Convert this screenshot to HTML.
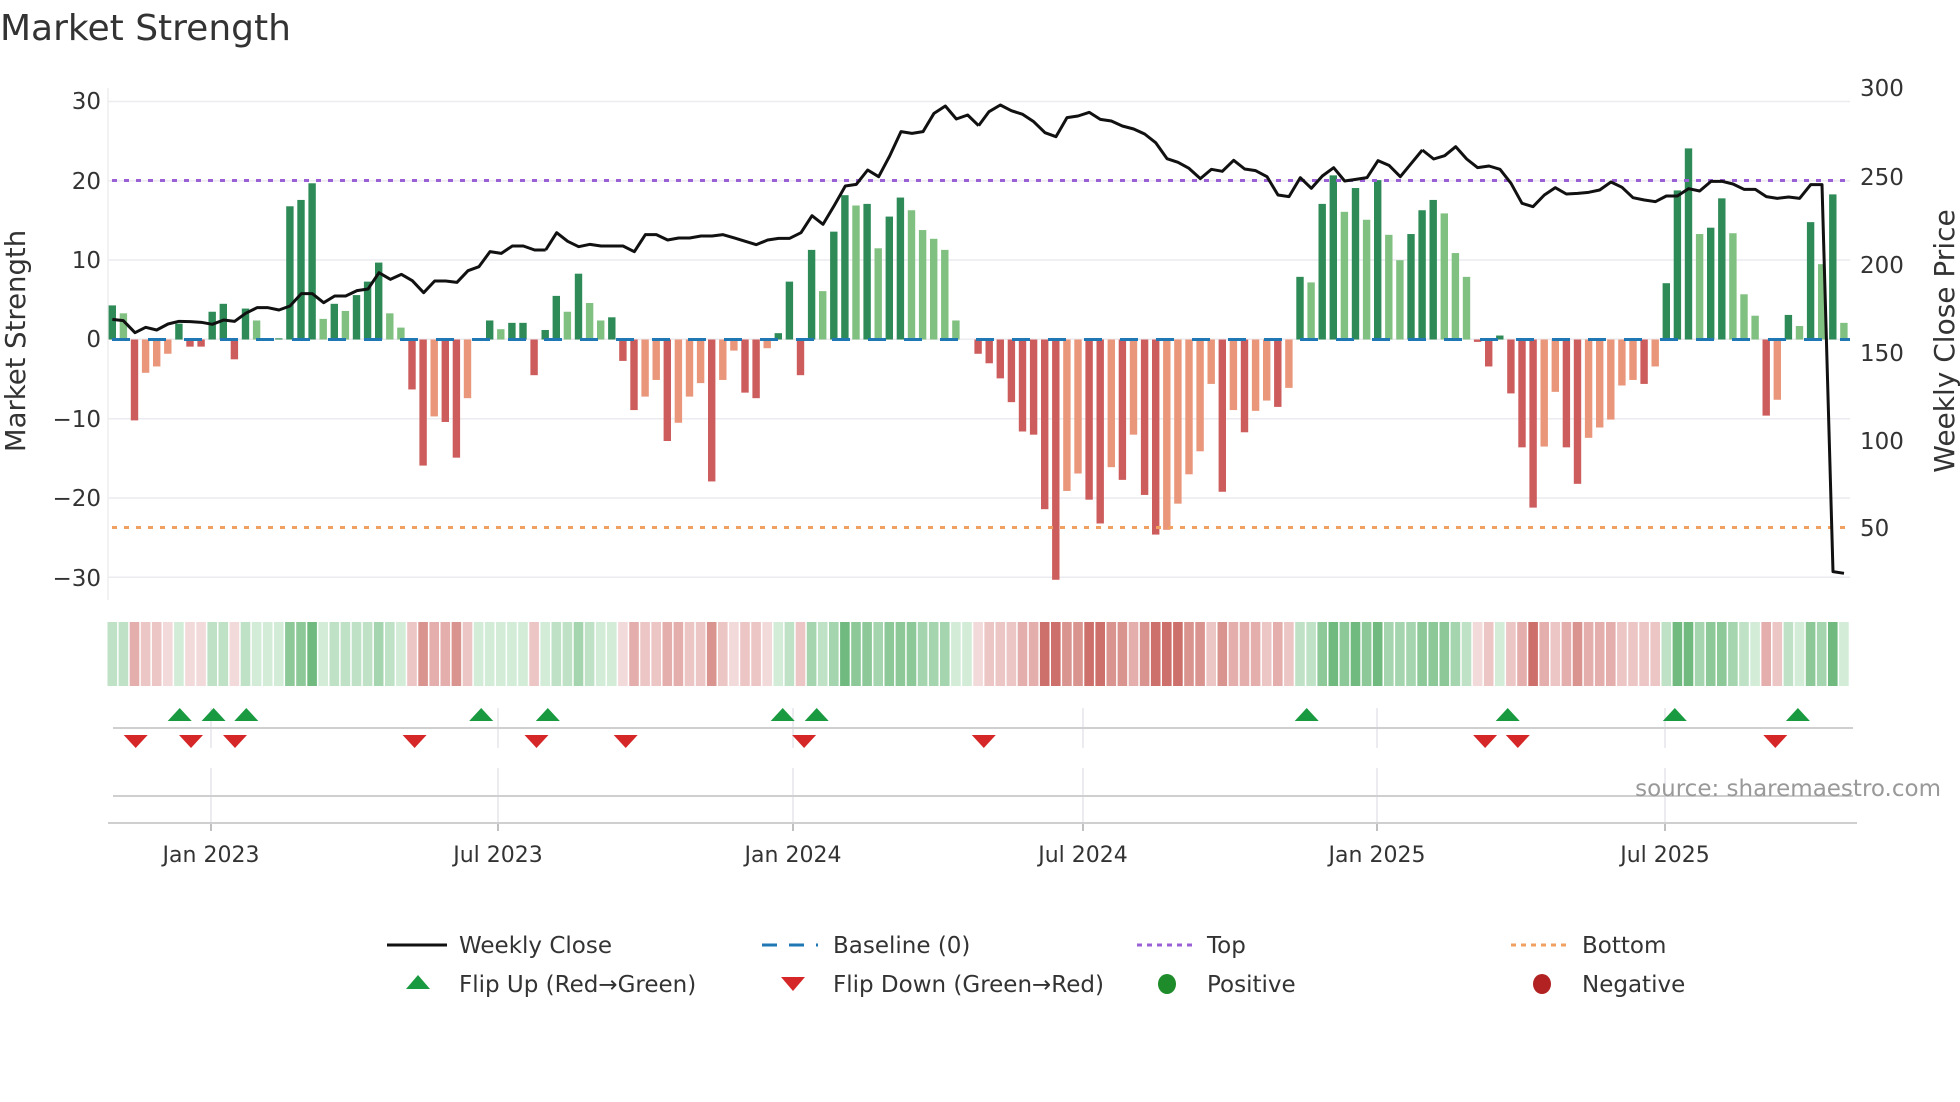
<!DOCTYPE html>
<html><head><meta charset="utf-8">
<style>
html,body{margin:0;padding:0;background:#fff;}
svg{display:block;font-family:"DejaVu Sans","Liberation Sans",sans-serif;}
.D{fill:#2e8b57}.L{fill:#80c080}.R{fill:#cd5c5c}.O{fill:#e9967a}
.g1{fill:#d3ecd8}.g2{fill:#bfe2c6}.g3{fill:#a5d5ae}.g4{fill:#8cc898}.g5{fill:#70ba80}
.r1{fill:#f3dada}.r2{fill:#ecc5c5}.r3{fill:#e4aeac}.r4{fill:#da9490}.r5{fill:#cd6f6a}
.up{fill:#1a9a40}.dn{fill:#d62728}
</style></head>
<body>
<svg width="1960" height="1102" viewBox="0 0 1960 1102" xmlns="http://www.w3.org/2000/svg">
<rect width="1960" height="1102" fill="#fff"/>
<text x="0" y="40" font-size="36" fill="#333">Market Strength</text>
<g stroke="#ebebf0" stroke-width="1.5">
<line x1="108" y1="101.5" x2="1850" y2="101.5"/><line x1="108" y1="180.7" x2="1850" y2="180.7"/>
<line x1="108" y1="260" x2="1850" y2="260"/><line x1="108" y1="339.3" x2="1850" y2="339.3"/>
<line x1="108" y1="418.7" x2="1850" y2="418.7"/><line x1="108" y1="498" x2="1850" y2="498"/>
<line x1="108" y1="577.3" x2="1850" y2="577.3"/>
</g>
<line x1="108" y1="88" x2="108" y2="600" stroke="#eeeeee" stroke-width="1.5"/>
<g transform="translate(108.6,339.5) scale(11.1,-7.93)">
<rect class="D" x="0" y="0" width=".667" height="4.3"/>
<rect class="L" x="1" y="0" width=".667" height="3.3"/>
<rect class="R" x="2" y="-10.2" width=".667" height="10.2"/>
<rect class="O" x="3" y="-4.2" width=".667" height="4.2"/>
<rect class="O" x="4" y="-3.4" width=".667" height="3.4"/>
<rect class="O" x="5" y="-1.8" width=".667" height="1.8"/>
<rect class="D" x="6" y="0" width=".667" height="2"/>
<rect class="R" x="7" y="-.9" width=".667" height=".9"/>
<rect class="R" x="8" y="-.9" width=".667" height=".9"/>
<rect class="D" x="9" y="0" width=".667" height="3.5"/>
<rect class="D" x="10" y="0" width=".667" height="4.5"/>
<rect class="R" x="11" y="-2.5" width=".667" height="2.5"/>
<rect class="D" x="12" y="0" width=".667" height="3.9"/>
<rect class="L" x="13" y="0" width=".667" height="2.4"/>
<rect class="D" x="15" y="0" width=".667" height=".15"/>
<rect class="D" x="16" y="0" width=".667" height="16.8"/>
<rect class="D" x="17" y="0" width=".667" height="17.6"/>
<rect class="D" x="18" y="0" width=".667" height="19.7"/>
<rect class="L" x="19" y="0" width=".667" height="2.6"/>
<rect class="D" x="20" y="0" width=".667" height="4.5"/>
<rect class="L" x="21" y="0" width=".667" height="3.6"/>
<rect class="D" x="22" y="0" width=".667" height="5.6"/>
<rect class="D" x="23" y="0" width=".667" height="7.3"/>
<rect class="D" x="24" y="0" width=".667" height="9.7"/>
<rect class="L" x="25" y="0" width=".667" height="3.3"/>
<rect class="L" x="26" y="0" width=".667" height="1.5"/>
<rect class="R" x="27" y="-6.3" width=".667" height="6.3"/>
<rect class="R" x="28" y="-15.9" width=".667" height="15.9"/>
<rect class="O" x="29" y="-9.7" width=".667" height="9.7"/>
<rect class="R" x="30" y="-10.4" width=".667" height="10.4"/>
<rect class="R" x="31" y="-14.9" width=".667" height="14.9"/>
<rect class="O" x="32" y="-7.4" width=".667" height="7.4"/>
<rect class="D" x="34" y="0" width=".667" height="2.4"/>
<rect class="L" x="35" y="0" width=".667" height="1.3"/>
<rect class="D" x="36" y="0" width=".667" height="2.1"/>
<rect class="D" x="37" y="0" width=".667" height="2.1"/>
<rect class="R" x="38" y="-4.5" width=".667" height="4.5"/>
<rect class="D" x="39" y="0" width=".667" height="1.2"/>
<rect class="D" x="40" y="0" width=".667" height="5.5"/>
<rect class="L" x="41" y="0" width=".667" height="3.5"/>
<rect class="D" x="42" y="0" width=".667" height="8.3"/>
<rect class="L" x="43" y="0" width=".667" height="4.6"/>
<rect class="L" x="44" y="0" width=".667" height="2.4"/>
<rect class="D" x="45" y="0" width=".667" height="2.8"/>
<rect class="R" x="46" y="-2.7" width=".667" height="2.7"/>
<rect class="R" x="47" y="-8.9" width=".667" height="8.9"/>
<rect class="O" x="48" y="-7.2" width=".667" height="7.2"/>
<rect class="O" x="49" y="-5.1" width=".667" height="5.1"/>
<rect class="R" x="50" y="-12.8" width=".667" height="12.8"/>
<rect class="O" x="51" y="-10.5" width=".667" height="10.5"/>
<rect class="O" x="52" y="-7.2" width=".667" height="7.2"/>
<rect class="O" x="53" y="-5.5" width=".667" height="5.5"/>
<rect class="R" x="54" y="-17.9" width=".667" height="17.9"/>
<rect class="O" x="55" y="-5.1" width=".667" height="5.1"/>
<rect class="O" x="56" y="-1.4" width=".667" height="1.4"/>
<rect class="R" x="57" y="-6.7" width=".667" height="6.7"/>
<rect class="R" x="58" y="-7.4" width=".667" height="7.4"/>
<rect class="O" x="59" y="-1.1" width=".667" height="1.1"/>
<rect class="D" x="60" y="0" width=".667" height=".8"/>
<rect class="D" x="61" y="0" width=".667" height="7.3"/>
<rect class="R" x="62" y="-4.5" width=".667" height="4.5"/>
<rect class="D" x="63" y="0" width=".667" height="11.3"/>
<rect class="L" x="64" y="0" width=".667" height="6.1"/>
<rect class="D" x="65" y="0" width=".667" height="13.6"/>
<rect class="D" x="66" y="0" width=".667" height="18.2"/>
<rect class="L" x="67" y="0" width=".667" height="16.9"/>
<rect class="D" x="68" y="0" width=".667" height="17.1"/>
<rect class="L" x="69" y="0" width=".667" height="11.5"/>
<rect class="D" x="70" y="0" width=".667" height="15.5"/>
<rect class="D" x="71" y="0" width=".667" height="17.9"/>
<rect class="L" x="72" y="0" width=".667" height="16.3"/>
<rect class="L" x="73" y="0" width=".667" height="13.8"/>
<rect class="L" x="74" y="0" width=".667" height="12.7"/>
<rect class="L" x="75" y="0" width=".667" height="11.3"/>
<rect class="L" x="76" y="0" width=".667" height="2.4"/>
<rect class="R" x="78" y="-1.8" width=".667" height="1.8"/>
<rect class="R" x="79" y="-3" width=".667" height="3"/>
<rect class="R" x="80" y="-4.9" width=".667" height="4.9"/>
<rect class="R" x="81" y="-7.9" width=".667" height="7.9"/>
<rect class="R" x="82" y="-11.6" width=".667" height="11.6"/>
<rect class="R" x="83" y="-12" width=".667" height="12"/>
<rect class="R" x="84" y="-21.4" width=".667" height="21.4"/>
<rect class="R" x="85" y="-30.3" width=".667" height="30.3"/>
<rect class="O" x="86" y="-19.1" width=".667" height="19.1"/>
<rect class="O" x="87" y="-16.9" width=".667" height="16.9"/>
<rect class="R" x="88" y="-20.2" width=".667" height="20.2"/>
<rect class="R" x="89" y="-23.2" width=".667" height="23.2"/>
<rect class="O" x="90" y="-16.1" width=".667" height="16.1"/>
<rect class="R" x="91" y="-17.7" width=".667" height="17.7"/>
<rect class="O" x="92" y="-12" width=".667" height="12"/>
<rect class="R" x="93" y="-19.6" width=".667" height="19.6"/>
<rect class="R" x="94" y="-24.6" width=".667" height="24.6"/>
<rect class="O" x="95" y="-24" width=".667" height="24"/>
<rect class="O" x="96" y="-20.7" width=".667" height="20.7"/>
<rect class="O" x="97" y="-17" width=".667" height="17"/>
<rect class="O" x="98" y="-14.1" width=".667" height="14.1"/>
<rect class="O" x="99" y="-5.6" width=".667" height="5.6"/>
<rect class="R" x="100" y="-19.2" width=".667" height="19.2"/>
<rect class="O" x="101" y="-8.9" width=".667" height="8.9"/>
<rect class="R" x="102" y="-11.7" width=".667" height="11.7"/>
<rect class="O" x="103" y="-9" width=".667" height="9"/>
<rect class="O" x="104" y="-7.7" width=".667" height="7.7"/>
<rect class="R" x="105" y="-8.5" width=".667" height="8.5"/>
<rect class="O" x="106" y="-6.1" width=".667" height="6.1"/>
<rect class="D" x="107" y="0" width=".667" height="7.9"/>
<rect class="L" x="108" y="0" width=".667" height="7.2"/>
<rect class="D" x="109" y="0" width=".667" height="17.1"/>
<rect class="D" x="110" y="0" width=".667" height="20.7"/>
<rect class="L" x="111" y="0" width=".667" height="16.1"/>
<rect class="D" x="112" y="0" width=".667" height="19.1"/>
<rect class="L" x="113" y="0" width=".667" height="15.1"/>
<rect class="D" x="114" y="0" width=".667" height="20.1"/>
<rect class="L" x="115" y="0" width=".667" height="13.2"/>
<rect class="L" x="116" y="0" width=".667" height="10"/>
<rect class="D" x="117" y="0" width=".667" height="13.3"/>
<rect class="D" x="118" y="0" width=".667" height="16.3"/>
<rect class="D" x="119" y="0" width=".667" height="17.6"/>
<rect class="L" x="120" y="0" width=".667" height="15.9"/>
<rect class="L" x="121" y="0" width=".667" height="10.9"/>
<rect class="L" x="122" y="0" width=".667" height="7.9"/>
<rect class="R" x="123" y="-.3" width=".667" height=".3"/>
<rect class="R" x="124" y="-3.4" width=".667" height="3.4"/>
<rect class="D" x="125" y="0" width=".667" height=".5"/>
<rect class="R" x="126" y="-6.8" width=".667" height="6.8"/>
<rect class="R" x="127" y="-13.6" width=".667" height="13.6"/>
<rect class="R" x="128" y="-21.2" width=".667" height="21.2"/>
<rect class="O" x="129" y="-13.5" width=".667" height="13.5"/>
<rect class="O" x="130" y="-6.6" width=".667" height="6.6"/>
<rect class="R" x="131" y="-13.6" width=".667" height="13.6"/>
<rect class="R" x="132" y="-18.2" width=".667" height="18.2"/>
<rect class="O" x="133" y="-12.4" width=".667" height="12.4"/>
<rect class="O" x="134" y="-11.1" width=".667" height="11.1"/>
<rect class="O" x="135" y="-10.1" width=".667" height="10.1"/>
<rect class="O" x="136" y="-5.8" width=".667" height="5.8"/>
<rect class="O" x="137" y="-5.1" width=".667" height="5.1"/>
<rect class="R" x="138" y="-5.6" width=".667" height="5.6"/>
<rect class="O" x="139" y="-3.4" width=".667" height="3.4"/>
<rect class="D" x="140" y="0" width=".667" height="7.1"/>
<rect class="D" x="141" y="0" width=".667" height="18.8"/>
<rect class="D" x="142" y="0" width=".667" height="24.1"/>
<rect class="L" x="143" y="0" width=".667" height="13.3"/>
<rect class="D" x="144" y="0" width=".667" height="14.1"/>
<rect class="D" x="145" y="0" width=".667" height="17.8"/>
<rect class="L" x="146" y="0" width=".667" height="13.4"/>
<rect class="L" x="147" y="0" width=".667" height="5.7"/>
<rect class="L" x="148" y="0" width=".667" height="3"/>
<rect class="R" x="149" y="-9.6" width=".667" height="9.6"/>
<rect class="O" x="150" y="-7.6" width=".667" height="7.6"/>
<rect class="D" x="151" y="0" width=".667" height="3.1"/>
<rect class="L" x="152" y="0" width=".667" height="1.7"/>
<rect class="D" x="153" y="0" width=".667" height="14.8"/>
<rect class="L" x="154" y="0" width=".667" height="9.5"/>
<rect class="D" x="155" y="0" width=".667" height="18.3"/>
<rect class="L" x="156" y="0" width=".667" height="2.1"/>
</g>
<line x1="112" y1="339.5" x2="1850" y2="339.5" stroke="#1f77b4" stroke-width="3" stroke-dasharray="18 18"/>
<line x1="112" y1="180.5" x2="1852" y2="180.5" stroke="#9b5fd6" stroke-width="3" stroke-dasharray="5 7"/>
<line x1="112" y1="527.5" x2="1852" y2="527.5" stroke="#f0a060" stroke-width="3" stroke-dasharray="5 7"/>
<g fill="none" stroke="#111" stroke-width="3" stroke-linejoin="round">
<polyline vector-effect="non-scaling-stroke" transform="translate(105,80) scale(0.33333)" points="22,718 55,722 90,758 122,742 155,750 189,732 222,724 256,725 289,727 322,733 356,720 389,724 422,700 456,683 489,683 522,690 555,678 589,641 622,641 656,668 689,648 722,648 756,632 789,627 822,578 856,598 889,583 922,602 956,638 989,603 1022,603 1056,607 1089,572 1122,560 1155,515 1189,520 1222,498 1255,498 1289,510 1322,510"/>
<polyline vector-effect="non-scaling-stroke" transform="translate(545,80) scale(0.33333)" points="2,510 35,458 68,484 101,500 135,493 168,498 201,498 234,498 268,515 301,464 334,464 368,480 401,474 434,474 468,468 501,468 534,464 568,474 601,484 634,494 668,480 701,475 734,475 768,458 801,407 834,433 868,376 901,318 934,313 968,270 1001,290 1034,228 1068,155 1101,160 1134,155 1167,100 1201,78 1234,117 1268,105 1301,137"/>
<polyline vector-effect="non-scaling-stroke" transform="translate(985,80) scale(0.33333)" points="-19,137 12,95 46,75 79,92 113,103 146,125 180,158 213,170 246,113 279,108 313,97 346,118 379,123 412,138 446,147 479,162 512,188 546,236 579,247 612,265 646,296 679,268 712,274 746,241 779,267 812,272 846,290 879,345 912,350 946,293 979,325 1012,288 1046,263 1079,303 1112,298 1146,293 1179,242 1212,256 1246,290 1279,250 1312,210"/>
<polyline vector-effect="non-scaling-stroke" transform="translate(1425,80) scale(0.33333)" points="-8,210 26,237 59,227 92,200 125,237 158,263 192,258 225,268 258,310 291,370 324,380 358,345 391,323 424,342 458,340 491,337 524,330 558,306 591,322 624,353 658,360 691,365 724,348 757,348 791,326 824,333 858,304 891,304 924,312 957,328 991,328 1024,350 1057,355 1091,351 1124,355 1157,314 1191,314 1224,1475 1257,1480"/>
</g>
<g font-size="23" fill="#333" text-anchor="end">
<text x="101" y="109">30</text><text x="101" y="189">20</text><text x="101" y="268">10</text>
<text x="101" y="347">0</text><text x="101" y="427">−10</text><text x="101" y="506">−20</text><text x="101" y="586">−30</text>
</g>
<g font-size="23" fill="#333">
<text x="1860" y="96">300</text><text x="1860" y="185">250</text><text x="1860" y="273">200</text>
<text x="1860" y="361">150</text><text x="1860" y="449">100</text><text x="1860" y="536">50</text>
</g>
<text transform="translate(25,341) rotate(-90)" font-size="27.5" fill="#333" text-anchor="middle">Market Strength</text>
<text transform="translate(1954,341) rotate(-90)" font-size="28" fill="#333" text-anchor="middle">Weekly Close Price</text>
<g transform="translate(107.5,622) scale(11.1,1)">
<rect class="g2" x="0" width=".865" height="64"/><rect class="g2" x="1" width=".865" height="64"/><rect class="r3" x="2" width=".865" height="64"/><rect class="r2" x="3" width=".865" height="64"/><rect class="r2" x="4" width=".865" height="64"/><rect class="r1" x="5" width=".865" height="64"/><rect class="g1" x="6" width=".865" height="64"/><rect class="r1" x="7" width=".865" height="64"/><rect class="r1" x="8" width=".865" height="64"/><rect class="g2" x="9" width=".865" height="64"/>
<rect class="g2" x="10" width=".865" height="64"/><rect class="r1" x="11" width=".865" height="64"/><rect class="g2" x="12" width=".865" height="64"/><rect class="g1" x="13" width=".865" height="64"/><rect class="g1" x="14" width=".865" height="64"/><rect class="g1" x="15" width=".865" height="64"/><rect class="g4" x="16" width=".865" height="64"/><rect class="g4" x="17" width=".865" height="64"/><rect class="g5" x="18" width=".865" height="64"/><rect class="g1" x="19" width=".865" height="64"/>
<rect class="g2" x="20" width=".865" height="64"/><rect class="g2" x="21" width=".865" height="64"/><rect class="g2" x="22" width=".865" height="64"/><rect class="g2" x="23" width=".865" height="64"/><rect class="g3" x="24" width=".865" height="64"/><rect class="g2" x="25" width=".865" height="64"/><rect class="g1" x="26" width=".865" height="64"/><rect class="r2" x="27" width=".865" height="64"/><rect class="r4" x="28" width=".865" height="64"/><rect class="r3" x="29" width=".865" height="64"/>
<rect class="r3" x="30" width=".865" height="64"/><rect class="r4" x="31" width=".865" height="64"/><rect class="r2" x="32" width=".865" height="64"/><rect class="g1" x="33" width=".865" height="64"/><rect class="g1" x="34" width=".865" height="64"/><rect class="g1" x="35" width=".865" height="64"/><rect class="g1" x="36" width=".865" height="64"/><rect class="g1" x="37" width=".865" height="64"/><rect class="r2" x="38" width=".865" height="64"/><rect class="g1" x="39" width=".865" height="64"/>
<rect class="g2" x="40" width=".865" height="64"/><rect class="g2" x="41" width=".865" height="64"/><rect class="g3" x="42" width=".865" height="64"/><rect class="g2" x="43" width=".865" height="64"/><rect class="g1" x="44" width=".865" height="64"/><rect class="g1" x="45" width=".865" height="64"/><rect class="r1" x="46" width=".865" height="64"/><rect class="r3" x="47" width=".865" height="64"/><rect class="r2" x="48" width=".865" height="64"/><rect class="r2" x="49" width=".865" height="64"/>
<rect class="r3" x="50" width=".865" height="64"/><rect class="r3" x="51" width=".865" height="64"/><rect class="r2" x="52" width=".865" height="64"/><rect class="r2" x="53" width=".865" height="64"/><rect class="r4" x="54" width=".865" height="64"/><rect class="r2" x="55" width=".865" height="64"/><rect class="r1" x="56" width=".865" height="64"/><rect class="r2" x="57" width=".865" height="64"/><rect class="r2" x="58" width=".865" height="64"/><rect class="r1" x="59" width=".865" height="64"/>
<rect class="g1" x="60" width=".865" height="64"/><rect class="g2" x="61" width=".865" height="64"/><rect class="r2" x="62" width=".865" height="64"/><rect class="g3" x="63" width=".865" height="64"/><rect class="g2" x="64" width=".865" height="64"/><rect class="g3" x="65" width=".865" height="64"/><rect class="g5" x="66" width=".865" height="64"/><rect class="g4" x="67" width=".865" height="64"/><rect class="g4" x="68" width=".865" height="64"/><rect class="g3" x="69" width=".865" height="64"/>
<rect class="g4" x="70" width=".865" height="64"/><rect class="g4" x="71" width=".865" height="64"/><rect class="g4" x="72" width=".865" height="64"/><rect class="g3" x="73" width=".865" height="64"/><rect class="g3" x="74" width=".865" height="64"/><rect class="g3" x="75" width=".865" height="64"/><rect class="g1" x="76" width=".865" height="64"/><rect class="g1" x="77" width=".865" height="64"/><rect class="r1" x="78" width=".865" height="64"/><rect class="r2" x="79" width=".865" height="64"/>
<rect class="r2" x="80" width=".865" height="64"/><rect class="r2" x="81" width=".865" height="64"/><rect class="r3" x="82" width=".865" height="64"/><rect class="r3" x="83" width=".865" height="64"/><rect class="r5" x="84" width=".865" height="64"/><rect class="r5" x="85" width=".865" height="64"/><rect class="r4" x="86" width=".865" height="64"/><rect class="r4" x="87" width=".865" height="64"/><rect class="r5" x="88" width=".865" height="64"/><rect class="r5" x="89" width=".865" height="64"/>
<rect class="r4" x="90" width=".865" height="64"/><rect class="r4" x="91" width=".865" height="64"/><rect class="r3" x="92" width=".865" height="64"/><rect class="r4" x="93" width=".865" height="64"/><rect class="r5" x="94" width=".865" height="64"/><rect class="r5" x="95" width=".865" height="64"/><rect class="r5" x="96" width=".865" height="64"/><rect class="r4" x="97" width=".865" height="64"/><rect class="r4" x="98" width=".865" height="64"/><rect class="r2" x="99" width=".865" height="64"/>
<rect class="r4" x="100" width=".865" height="64"/><rect class="r3" x="101" width=".865" height="64"/><rect class="r3" x="102" width=".865" height="64"/><rect class="r3" x="103" width=".865" height="64"/><rect class="r2" x="104" width=".865" height="64"/><rect class="r3" x="105" width=".865" height="64"/><rect class="r2" x="106" width=".865" height="64"/><rect class="g2" x="107" width=".865" height="64"/><rect class="g2" x="108" width=".865" height="64"/><rect class="g4" x="109" width=".865" height="64"/>
<rect class="g5" x="110" width=".865" height="64"/><rect class="g4" x="111" width=".865" height="64"/><rect class="g5" x="112" width=".865" height="64"/><rect class="g4" x="113" width=".865" height="64"/><rect class="g5" x="114" width=".865" height="64"/><rect class="g3" x="115" width=".865" height="64"/><rect class="g3" x="116" width=".865" height="64"/><rect class="g3" x="117" width=".865" height="64"/><rect class="g4" x="118" width=".865" height="64"/><rect class="g4" x="119" width=".865" height="64"/>
<rect class="g4" x="120" width=".865" height="64"/><rect class="g3" x="121" width=".865" height="64"/><rect class="g2" x="122" width=".865" height="64"/><rect class="r1" x="123" width=".865" height="64"/><rect class="r2" x="124" width=".865" height="64"/><rect class="g1" x="125" width=".865" height="64"/><rect class="r2" x="126" width=".865" height="64"/><rect class="r3" x="127" width=".865" height="64"/><rect class="r5" x="128" width=".865" height="64"/><rect class="r3" x="129" width=".865" height="64"/>
<rect class="r2" x="130" width=".865" height="64"/><rect class="r3" x="131" width=".865" height="64"/><rect class="r4" x="132" width=".865" height="64"/><rect class="r3" x="133" width=".865" height="64"/><rect class="r3" x="134" width=".865" height="64"/><rect class="r3" x="135" width=".865" height="64"/><rect class="r2" x="136" width=".865" height="64"/><rect class="r2" x="137" width=".865" height="64"/><rect class="r2" x="138" width=".865" height="64"/><rect class="r2" x="139" width=".865" height="64"/>
<rect class="g2" x="140" width=".865" height="64"/><rect class="g5" x="141" width=".865" height="64"/><rect class="g5" x="142" width=".865" height="64"/><rect class="g3" x="143" width=".865" height="64"/><rect class="g4" x="144" width=".865" height="64"/><rect class="g4" x="145" width=".865" height="64"/><rect class="g3" x="146" width=".865" height="64"/><rect class="g2" x="147" width=".865" height="64"/><rect class="g1" x="148" width=".865" height="64"/><rect class="r3" x="149" width=".865" height="64"/>
<rect class="r2" x="150" width=".865" height="64"/><rect class="g2" x="151" width=".865" height="64"/><rect class="g1" x="152" width=".865" height="64"/><rect class="g4" x="153" width=".865" height="64"/><rect class="g3" x="154" width=".865" height="64"/><rect class="g5" x="155" width=".865" height="64"/><rect class="g1" x="156" width=".865" height="64"/>
</g>
<g stroke="#e6e6ea" stroke-width="1.5">
<line x1="211" y1="708" x2="211" y2="748"/><line x1="211" y1="768" x2="211" y2="823"/>
<line x1="498" y1="708" x2="498" y2="748"/><line x1="498" y1="768" x2="498" y2="823"/>
<line x1="793" y1="708" x2="793" y2="748"/><line x1="793" y1="768" x2="793" y2="823"/>
<line x1="1083" y1="708" x2="1083" y2="748"/><line x1="1083" y1="768" x2="1083" y2="823"/>
<line x1="1377" y1="708" x2="1377" y2="748"/><line x1="1377" y1="768" x2="1377" y2="823"/>
<line x1="1665" y1="708" x2="1665" y2="748"/><line x1="1665" y1="768" x2="1665" y2="823"/>
</g>
<g stroke="#aaa" stroke-width="1.5">
<line x1="211" y1="823" x2="211" y2="831"/><line x1="498" y1="823" x2="498" y2="831"/><line x1="793" y1="823" x2="793" y2="831"/>
<line x1="1083" y1="823" x2="1083" y2="831"/><line x1="1377" y1="823" x2="1377" y2="831"/><line x1="1665" y1="823" x2="1665" y2="831"/>
</g>
<line x1="113" y1="728" x2="1853" y2="728" stroke="#cfcfcf" stroke-width="2"/>
<line x1="113" y1="796" x2="1853" y2="796" stroke="#cfcfcf" stroke-width="2"/>
<line x1="108" y1="823" x2="1857" y2="823" stroke="#cfcfcf" stroke-width="2"/>
<g class="up">
<polygon transform="translate(179.7,0)" points="-12,721 12,721 0,708"/>
<polygon transform="translate(213.6,0)" points="-12,721 12,721 0,708"/>
<polygon transform="translate(246.3,0)" points="-12,721 12,721 0,708"/>
<polygon transform="translate(481.2,0)" points="-12,721 12,721 0,708"/>
<polygon transform="translate(547.8,0)" points="-12,721 12,721 0,708"/>
<polygon transform="translate(782.7,0)" points="-12,721 12,721 0,708"/>
<polygon transform="translate(816.7,0)" points="-12,721 12,721 0,708"/>
<polygon transform="translate(1306.7,0)" points="-12,721 12,721 0,708"/>
<polygon transform="translate(1507.7,0)" points="-12,721 12,721 0,708"/>
<polygon transform="translate(1674.8,0)" points="-12,721 12,721 0,708"/>
<polygon transform="translate(1797.9,0)" points="-12,721 12,721 0,708"/>
</g>
<g class="dn">
<polygon transform="translate(135.7,0)" points="-12,735 12,735 0,748"/>
<polygon transform="translate(191,0)" points="-12,735 12,735 0,748"/>
<polygon transform="translate(235,0)" points="-12,735 12,735 0,748"/>
<polygon transform="translate(414.6,0)" points="-12,735 12,735 0,748"/>
<polygon transform="translate(536.5,0)" points="-12,735 12,735 0,748"/>
<polygon transform="translate(625.7,0)" points="-12,735 12,735 0,748"/>
<polygon transform="translate(804.1,0)" points="-12,735 12,735 0,748"/>
<polygon transform="translate(983.8,0)" points="-12,735 12,735 0,748"/>
<polygon transform="translate(1485.1,0)" points="-12,735 12,735 0,748"/>
<polygon transform="translate(1517.8,0)" points="-12,735 12,735 0,748"/>
<polygon transform="translate(1775.3,0)" points="-12,735 12,735 0,748"/>
</g>
<g font-size="22" fill="#333" text-anchor="middle">
<text x="211" y="862">Jan 2023</text><text x="498" y="862">Jul 2023</text><text x="793" y="862">Jan 2024</text>
<text x="1083" y="862">Jul 2024</text><text x="1377" y="862">Jan 2025</text><text x="1665" y="862">Jul 2025</text>
</g>
<text x="1941" y="796" font-size="23" fill="#999" text-anchor="end">source: sharemaestro.com</text>
<g font-size="23" fill="#333">
<line x1="387" y1="945" x2="447" y2="945" stroke="#111" stroke-width="3"/>
<text x="459" y="953">Weekly Close</text>
<line x1="762" y1="945" x2="818" y2="945" stroke="#1f77b4" stroke-width="3" stroke-dasharray="15 12"/>
<text x="833" y="953">Baseline (0)</text>
<line x1="1137" y1="945" x2="1192" y2="945" stroke="#9b5fd6" stroke-width="3" stroke-dasharray="5 5"/>
<text x="1207" y="953">Top</text>
<line x1="1511" y1="945" x2="1567" y2="945" stroke="#f0a060" stroke-width="3" stroke-dasharray="5 5"/>
<text x="1582" y="953">Bottom</text>
<polygon points="406,989 430,989 418,975" fill="#1a9a40"/>
<text x="459" y="992">Flip Up (Red→Green)</text>
<polygon points="781,977 805,977 793,991" fill="#d62728"/>
<text x="833" y="992">Flip Down (Green→Red)</text>
<ellipse cx="1167" cy="984" rx="9" ry="10" fill="#1e8c2a"/>
<text x="1207" y="992">Positive</text>
<ellipse cx="1542" cy="984" rx="9" ry="10" fill="#b22222"/>
<text x="1582" y="992">Negative</text>
</g>
</svg>
</body></html>
